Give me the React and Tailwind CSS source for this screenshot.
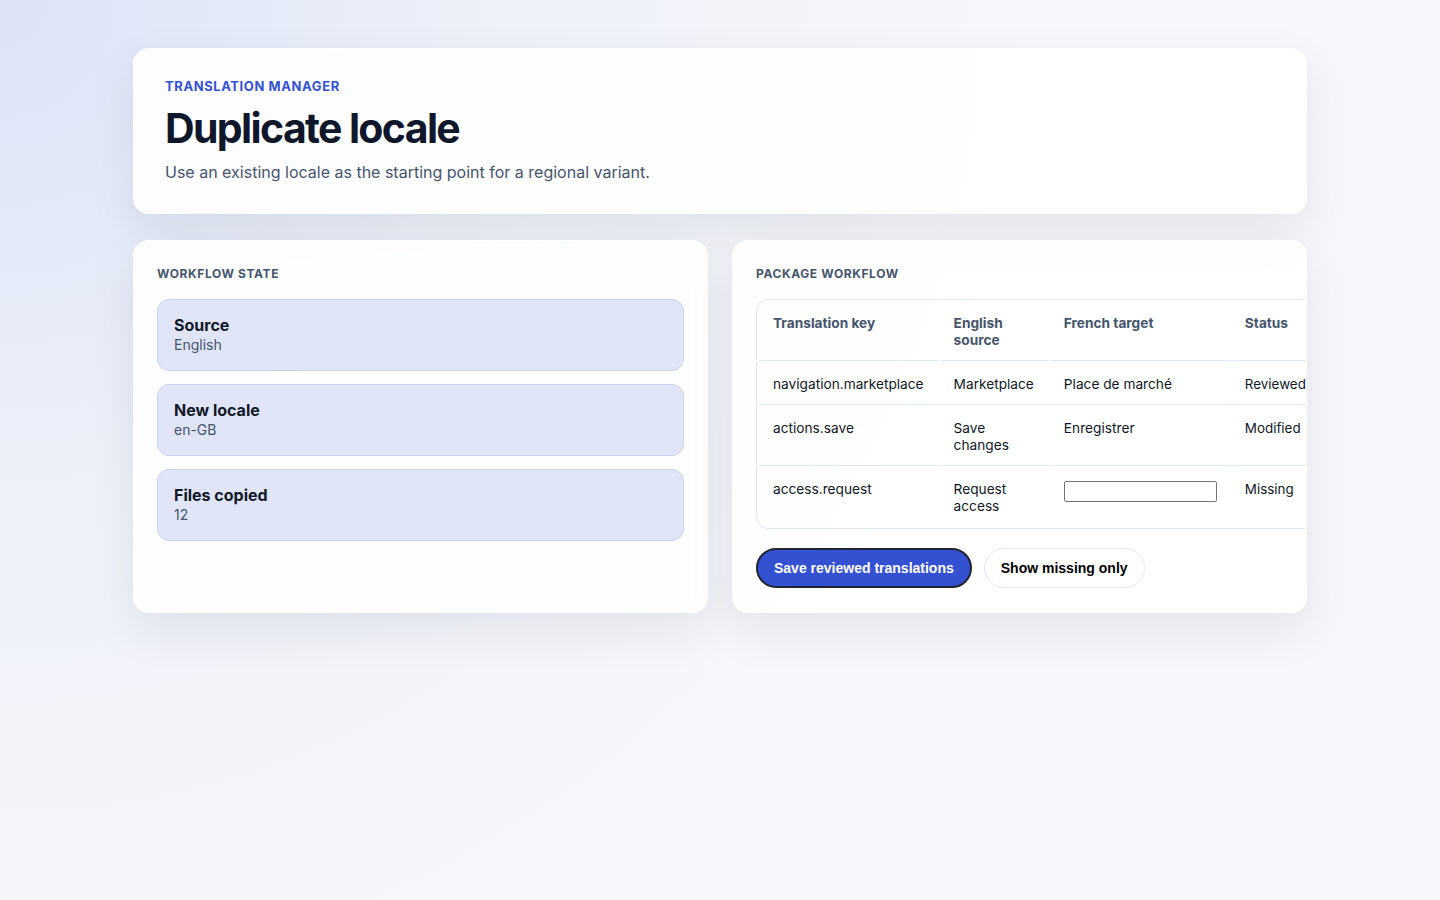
import { useState } from 'react'

const FONT = { fontFamily: 'Inter, "Noto Sans", sans-serif' }

const STATES = [
  { label: 'Source', value: 'English' },
  { label: 'New locale', value: 'en-GB' },
  { label: 'Files copied', value: '12' },
]

const ROWS = [
  { key: 'navigation.marketplace', source: 'Marketplace', target: 'Place de marché', status: 'Reviewed' },
  { key: 'actions.save', source: 'Save changes', target: 'Enregistrer', status: 'Modified' },
  { key: 'access.request', source: 'Request access', target: null, status: 'Missing' },
]

function Card({ className = '', children }) {
  return (
    <div
      className={`rounded-2xl border border-white/70 bg-white/90 shadow-[0_18px_48px_rgba(15,23,42,0.08)] ${className}`}
    >
      {children}
    </div>
  )
}

function SectionLabel({ children }) {
  return (
    <h2 className="text-[12px] font-bold uppercase leading-[1.5] tracking-[0.05em] text-slate-600">
      {children}
    </h2>
  )
}

export default function App() {
  const [rows, setRows] = useState(ROWS)

  return (
    <div
      style={FONT}
      className="min-h-screen bg-[#f6f7fa] bg-[radial-gradient(circle_at_0%_0%,#dce3f7_0%,#eef1f9_30%,#f6f7fa_60%)] pt-12 pb-12 text-slate-900"
    >
      <div className="mx-auto w-[1174px]">
        <Card className="px-[31px] py-7">
          <p className="text-[13px] font-bold uppercase leading-[1.5] tracking-[0.045em] text-[#3451d1]">
            Translation manager
          </p>
          <h1 className="mt-2 text-[41px] font-bold leading-[1.15] tracking-[-0.04em] text-[#0f172a]">
            Duplicate locale
          </h1>
          <p className="mt-2 text-[16px] leading-[1.6] text-slate-600">
            Use an existing locale as the starting point for a regional variant.
          </p>
        </Card>

        <div className="mt-[26px] grid grid-cols-2 gap-6">
          <Card className="px-[23px] py-6">
            <SectionLabel>Workflow state</SectionLabel>
            <div className="mt-4 flex flex-col gap-[13px]">
              {STATES.map((s) => (
                <div
                  key={s.label}
                  className="rounded-xl border border-[#cad2ee] bg-[#e0e6f8] px-4 py-[15px]"
                >
                  <div className="text-base font-bold leading-5 text-[#111827]">{s.label}</div>
                  <div className="text-sm leading-5 text-slate-600">{s.value}</div>
                </div>
              ))}
            </div>
          </Card>

          <Card className="overflow-hidden px-[23px] py-6">
            <SectionLabel>Package workflow</SectionLabel>
            <table className="mt-4 w-full border-separate border-spacing-[2px] rounded-xl border border-slate-200 text-left text-[13.7px] leading-[17px]">
              <thead>
                <tr className="text-slate-600">
                  <th className="border-b border-slate-200 px-3.5 pt-[13px] pb-[11px] align-top font-bold">Translation key</th>
                  <th className="border-b border-slate-200 px-3.5 pt-[13px] pb-[11px] align-top font-bold">English source</th>
                  <th className="border-b border-slate-200 px-3.5 pt-[13px] pb-[11px] align-top font-bold">French target</th>
                  <th className="border-b border-slate-200 pl-3 pr-2 pt-[13px] pb-[11px] align-top font-bold">Status</th>
                </tr>
              </thead>
              <tbody className="text-[#111827]">
                {rows.map((r, i) => {
                  const b = i < rows.length - 1 ? 'border-b border-slate-200' : ''
                  return (
                    <tr key={r.key}>
                      <td className={`${b} px-3.5 pt-[13px] pb-[11px] align-top whitespace-nowrap`}>{r.key}</td>
                      <td className={`${b} px-3.5 pt-[13px] pb-[11px] align-top`}>{r.source}</td>
                      <td className={`${b} px-3.5 pt-[13px] pb-[11px] align-top whitespace-nowrap`}>
                        {r.target === null ? (
                          <input
                            type="text"
                            value={r.draft || ''}
                            onChange={(e) =>
                              setRows((all) =>
                                all.map((x) => (x.key === r.key ? { ...x, draft: e.target.value } : x)),
                              )
                            }
                            className="block h-[21px] w-[153px] rounded-[2px] border border-[#767676] bg-white px-1 text-[13px]"
                          />
                        ) : (
                          r.target
                        )}
                      </td>
                      <td className={`${b} pl-3 pr-2 pt-[13px] pb-[11px] align-top text-[13.4px]`}>{r.status}</td>
                    </tr>
                  )
                })}
              </tbody>
            </table>

            <div
              className="mt-[19px] flex items-center gap-3"
              style={{ fontFamily: '"Liberation Sans", Arial, sans-serif' }}
            >
              <button
                type="button"
                className="h-10 rounded-full border-2 border-[#1f2430] bg-[#3451d1] px-4 text-sm font-bold text-white"
              >
                Save reviewed translations
              </button>
              <button
                type="button"
                className="h-10 rounded-full border border-slate-200 bg-white px-4 text-sm font-bold text-black"
              >
                Show missing only
              </button>
            </div>
          </Card>
        </div>
      </div>
    </div>
  )
}
